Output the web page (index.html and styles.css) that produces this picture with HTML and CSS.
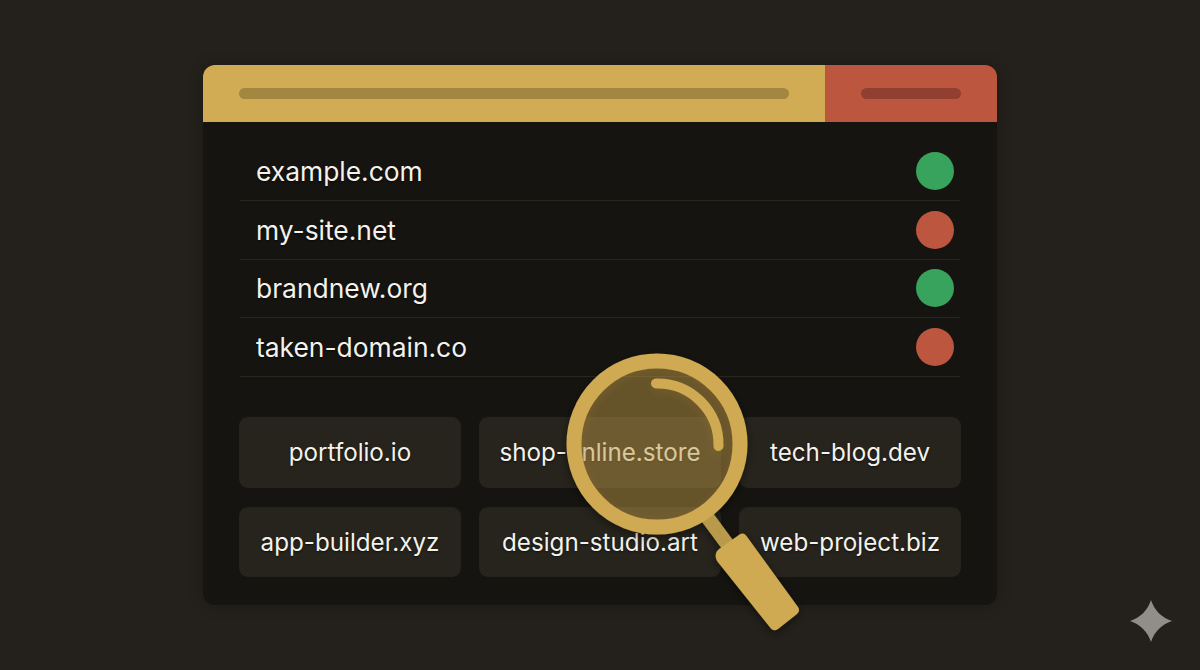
FILE: index.html
```html
<!DOCTYPE html>
<html lang="en">
<head>
<meta charset="utf-8">
<title>Domain search</title>
<link rel="stylesheet" href="styles.css">
</head>
<body>
<main class="window">
  <header class="titlebar">
    <div class="search"><span class="search-bar"></span></div>
    <div class="action"><span class="action-bar"></span></div>
  </header>
  <section class="panel">
    <ul class="list">
      <li class="row"><span>example.com</span><i class="dot ok"></i></li>
      <li class="row"><span>my-site.net</span><i class="dot no"></i></li>
      <li class="row"><span>brandnew.org</span><i class="dot ok"></i></li>
      <li class="row"><span>taken-domain.co</span><i class="dot no"></i></li>
    </ul>
    <div class="cards">
      <div class="card">portfolio.io</div>
      <div class="card">shop-online.store</div>
      <div class="card">tech-blog.dev</div>
      <div class="card">app-builder.xyz</div>
      <div class="card">design-studio.art</div>
      <div class="card">web-project.biz</div>
    </div>
  </section>
  <svg class="magnifier" width="260" height="300" viewBox="0 0 260 300" aria-hidden="true">
    <defs>
      <filter id="soft" x="-20%" y="-20%" width="140%" height="140%">
        <feDropShadow dx="0" dy="3" stdDeviation="5" flood-color="#000" flood-opacity=".45"/>
      </filter>
    </defs>
    <g filter="url(#soft)">
      <line x1="141" y1="166" x2="172" y2="208" stroke="#b99a4c" stroke-width="14"/>
      <path d="M157.500 205.500 L178.500 190.500 Q182.500 188 185.500 192 L237 263 Q239.500 267 236 270 L217 285 Q212.500 288 209.500 284 L156 217 Q152.500 209.500 157.500 205.500 Z" fill="#cfaa52"/>
      <circle cx="96" cy="100" r="83" fill="#d4ac4c" fill-opacity=".37" stroke="#cfaa52" stroke-width="15"/>
      <path d="M95 39.500 A61 61 0 0 1 157.500 102" fill="none" stroke="#cfaa52" stroke-width="10" stroke-linecap="round"/>
    </g>
  </svg>
</main>
<svg class="sparkle" width="42" height="42" viewBox="0 0 42 42" aria-hidden="true">
  <path d="M21 0 C24.500 10.500 31.500 17.500 42 21 C31.500 24.500 24.500 31.500 21 42 C17.500 31.500 10.500 24.500 0 21 C10.500 17.500 17.500 10.500 21 0 Z" fill="#8f8e8a"/>
</svg>
</body>
</html>
```

FILE: styles.css
```css
* { box-sizing: border-box; margin: 0; padding: 0; }
html, body { height: 100%; }
body {
  background: #24211c;
  font-family: Inter, "Liberation Sans", sans-serif;
  color: #f4f2ec;
  display: flex;
  align-items: center;
  justify-content: center;
  overflow: hidden;
}
.window {
  position: relative;
  width: 794px;
  height: 540px;
  border-radius: 12px;
  background: #151410;
  box-shadow: 0 0 14px rgba(0, 0, 0, .25);
}
.titlebar {
  display: flex;
  height: 57px;
  border-radius: 12px 12px 0 0;
  overflow: hidden;
}
.search {
  flex: 1;
  background: #d1ac55;
  padding: 0 36px;
  display: flex;
  align-items: center;
}
.search-bar {
  display: block;
  width: 550px;
  height: 11px;
  border-radius: 6px;
  background: #a38741;
}
.action {
  width: 172px;
  background: #bd563f;
  padding-left: 36px;
  display: flex;
  align-items: center;
}
.action-bar {
  display: block;
  width: 100px;
  height: 11px;
  border-radius: 6px;
  background: #903f30;
}
.panel { padding: 20.500px 37px 28px 36px; }
.list { list-style: none; }
.row {
  height: 58.600px;
  display: flex;
  align-items: center;
  justify-content: space-between;
  padding: 0 6px 0 16px;
  margin-left: 1px;
  border-bottom: 1px solid #2a2720;
  font-size: 26.400px;
  text-shadow: 0 1px 2px rgba(0, 0, 0, .6);
}
.dot { display: block; width: 38px; height: 38px; border-radius: 50%; }
.ok { background: #38a35c; }
.no { background: #bd563f; }
.cards {
  margin-top: 40.500px;
  display: grid;
  grid-template-columns: 222px 242px 222px;
  grid-auto-rows: 70.500px;
  gap: 19px 18px;
}
.card {
  background: #27241d;
  border-radius: 9px;
  display: flex;
  align-items: center;
  justify-content: center;
  font-size: 24.200px;
  white-space: nowrap;
  text-shadow: 0 1px 2px rgba(0, 0, 0, .6);
}
.magnifier { position: absolute; left: 357.500px; top: 278.500px; }
.sparkle { position: absolute; left: 1130px; top: 600px; }
```
